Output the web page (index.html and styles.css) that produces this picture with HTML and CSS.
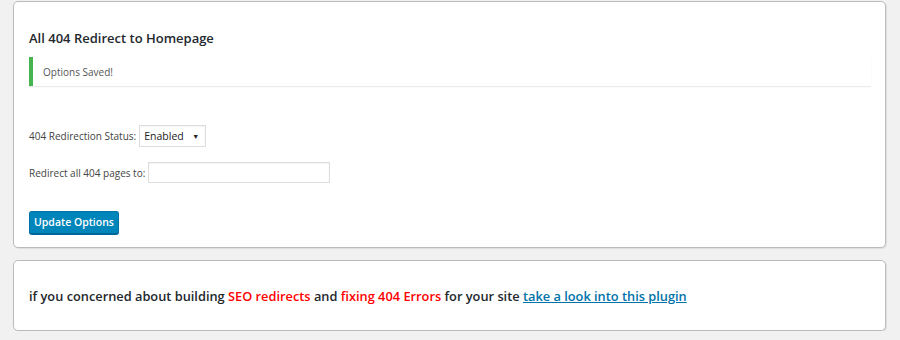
FILE: index.html
```html
<!DOCTYPE html>
<html>
<head>
<meta charset="UTF-8">
<title>All 404 Redirect to Homepage</title>
<link rel="stylesheet" href="styles.css">
</head>
<body>
	<div class="wrap">
		<div class="box">
			<h2 class="title">All 404 Redirect to Homepage</h2>
			<div class="notice">
				<p>Options Saved!</p>
			</div>

			<form class="options">
				<div class="row">
					<label for="status">404 Redirection Status:</label>
					<div class="select">
						<span>Enabled</span>
						<i class="arrow">&#9660;</i>
					</div>
				</div>
				<div class="row">
					<label for="target">Redirect all 404 pages to:</label>
					<input type="text" id="target" class="field">
				</div>
				<div class="submit">
					<button type="button" class="button">Update Options</button>
				</div>
			</form>
		</div>

		<div class="box promo">
			<p>if you concerned about building <span class="red">SEO redirects</span> and <span class="red">fixing 404 Errors</span> for your site <a href="javascript: void(0);">take a look into this plugin</a></p>
		</div>
	</div>
</body>
</html>
```

FILE: styles.css
```css
* {
	padding: 0;
	margin: 0;
	box-sizing: border-box;
}

body {
	background-color: #f1f1f1;
	font-family: "Open Sans", "Liberation Sans", sans-serif;
	color: #444;
}

.wrap {
	padding: 1px 14px 0 13px;
	display: flex;
	flex-direction: column;
	gap: 12px;
}

.box {
	background-color: #fff;
	border: 1px solid #bbb;
	border-radius: 5px;
	box-shadow: 1px 1px 1px rgba(0, 0, 0, 0.08);
	padding: 0 14px 0 15px;
}

.title {
	font-size: 13px;
	font-weight: 600;
	color: #23282d;
	padding-top: 27px;
	line-height: 18px;
}

.notice {
	margin-top: 10px;
	height: 29px;
	border-left: 4px solid #46b450;
	box-shadow: 0 1px 1px rgba(0, 0, 0, 0.08);
	display: flex;
	align-items: center;
	padding-left: 10px;
}

.notice p {
	font-size: 10px;
	color: #555;
}

.options {
	padding-top: 39px;
	padding-bottom: 13px;
}

.row {
	display: flex;
	align-items: center;
	gap: 3px;
	margin-bottom: 15px;
	font-size: 10px;
}

.select {
	width: 67px;
	height: 22px;
	border: 1px solid #ddd;
	box-shadow: inset 0 1px 2px rgba(0, 0, 0, 0.05);
	display: flex;
	align-items: center;
	justify-content: space-between;
	padding: 0 6px 0 4px;
	font-size: 10.5px;
	color: #222;
}

.arrow {
	font-style: normal;
	font-size: 7px;
	color: #222;
}

.field {
	width: 182px;
	height: 21px;
	border: 1px solid #ddd;
	box-shadow: inset 0 1px 2px rgba(0, 0, 0, 0.05);
	outline: none;
}

.submit {
	padding-top: 11px;
}

.button {
	width: 90px;
	height: 23px;
	background-color: #0085ba;
	border: 1px solid #0073aa;
	border-bottom-color: #006799;
	border-radius: 3px;
	box-shadow: 0 1px 0 #006799;
	color: #fff;
	font-family: "Open Sans", "Liberation Sans", sans-serif;
	font-size: 10.5px;
	font-weight: 600;
}

.promo {
	height: 71px;
	display: flex;
	align-items: center;
}

.promo p {
	font-size: 12.8px;
	font-weight: 600;
	color: #23282d;
	padding-top: 1px;
}

.red {
	color: #f00;
}

.promo a {
	color: #0073aa;
	text-decoration: underline;
}
```
